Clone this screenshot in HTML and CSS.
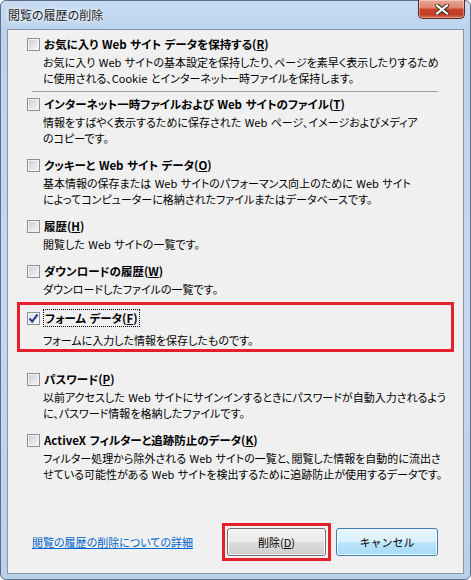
FILE: index.html
```html
<!DOCTYPE html>
<html lang="ja">
<head>
  <meta charset="UTF-8" />
  <title>閲覧の履歴の削除</title>
  <link rel="stylesheet" href="styles.css">
</head>
<body>

  <div class="window">
    <div class="titlebar">
      <span class="title">閲覧の履歴の削除</span>
      <button class="close-btn">
        <svg width="14" height="11" viewBox="0 0 14 11">
          <path d="M2 1.5 L12 9.5 M12 1.5 L2 9.5" stroke="#3b2a28" stroke-width="4.2" stroke-linecap="square" fill="none" />
          <path d="M2 1.5 L12 9.5 M12 1.5 L2 9.5" stroke="#ffffff" stroke-width="2.2" stroke-linecap="square" fill="none" />
        </svg>
      </button>
    </div>

    <div class="content">
      <div class="options">
        <div class="option first">
          <div class="option-head"><span class="checkbox"></span><span class="option-label">お気に入り Web サイト データを保持する(<u>R</u>)</span></div>
          <p class="option-desc">お気に入り Web サイトの基本設定を保持したり、ページを素早く表示したりするため<br>に使用される、Cookie とインターネット一時ファイルを保持します。</p>
        </div>
        <hr class="separator">
        <div class="option after-sep">
          <div class="option-head"><span class="checkbox"></span><span class="option-label">インターネット一時ファイルおよび Web サイトのファイル(<u>T</u>)</span></div>
          <p class="option-desc">情報をすばやく表示するために保存された Web ページ、イメージおよびメディア<br>のコピーです。</p>
        </div>
        <div class="option">
          <div class="option-head"><span class="checkbox"></span><span class="option-label">クッキーと Web サイト データ(<u>O</u>)</span></div>
          <p class="option-desc">基本情報の保存または Web サイトのパフォーマンス向上のために Web サイト<br>によってコンピューターに格納されたファイルまたはデータベースです。</p>
        </div>
        <div class="option">
          <div class="option-head"><span class="checkbox"></span><span class="option-label">履歴(<u>H</u>)</span></div>
          <p class="option-desc">閲覧した Web サイトの一覧です。</p>
        </div>
        <div class="option">
          <div class="option-head"><span class="checkbox"></span><span class="option-label">ダウンロードの履歴(<u>W</u>)</span></div>
          <p class="option-desc">ダウンロードしたファイルの一覧です。</p>
        </div>
        <div class="option marked">
          <div class="option-head">
            <span class="checkbox checked">
              <svg width="11" height="11" viewBox="0 0 11 11">
                <path d="M1.5 5.5 L4.2 8.6 L9.5 1.5" stroke="#2a3f8f" stroke-width="2.1" fill="none" />
              </svg>
            </span>
            <span class="option-label focused">フォーム データ(<u>F</u>)</span>
          </div>
          <p class="option-desc">フォームに入力した情報を保存したものです。</p>
        </div>
        <div class="option">
          <div class="option-head"><span class="checkbox"></span><span class="option-label">パスワード(<u>P</u>)</span></div>
          <p class="option-desc">以前アクセスした Web サイトにサインインするときにパスワードが自動入力されるよう<br>に、パスワード情報を格納したファイルです。</p>
        </div>
        <div class="option">
          <div class="option-head"><span class="checkbox"></span><span class="option-label">ActiveX フィルターと追跡防止のデータ(<u>K</u>)</span></div>
          <p class="option-desc">フィルター処理から除外される Web サイトの一覧と、閲覧した情報を自動的に流出さ<br>せている可能性がある Web サイトを検出するために追跡防止が使用するデータです。</p>
        </div>
      </div>

      <div class="footer">
        <a class="help-link" href="#">閲覧の履歴の削除についての詳細</a>
        <div class="buttons">
          <span class="btn-mark"><button class="btn">削除(<u>D</u>)</button></span>
          <button class="btn btn-default">キャンセル</button>
        </div>
      </div>
    </div>
  </div>

</body>
</html>
```

FILE: styles.css
```css
body {
  margin: 0;
  background: #ffffff;
  font-family: "Noto Sans CJK JP", "Noto Sans", sans-serif;
  font-size: 11px;
  color: #000;
  font-feature-settings: "palt";
  word-spacing: 1px;
}

.window {
  width: 471px;
  height: 580px;
  box-sizing: border-box;
  border: 1px solid #5d6f86;
  border-radius: 6px;
  background: linear-gradient(180deg, #c6dbf3 0%, #bcd3ee 30px, #c4d9f1 50%, #bad1ec 100%);
  display: flex;
  flex-direction: column;
}

.titlebar {
  height: 28px;
  display: flex;
  justify-content: space-between;
  align-items: flex-start;
  padding-left: 7px;
}

.title {
  font-size: 12px;
  line-height: 28px;
  color: #1a1a1a;
  text-shadow: 0 0 6px #ffffff, 0 0 3px #ffffff;
}

.close-btn {
  width: 47px;
  height: 19px;
  margin-top: -1px;
  margin-right: 5px;
  padding: 0;
  border: 1px solid #5b2a22;
  border-top: none;
  border-radius: 0 0 5px 5px;
  background: linear-gradient(180deg, #e9a896 0%, #dc836c 45%, #c8452c 50%, #c23c24 80%, #d76a4f 100%);
  box-shadow: inset 0 0 0 1px rgba(255, 255, 255, 0.35);
  display: flex;
  justify-content: center;
  align-items: center;
}

.content {
  flex: 1;
  margin: 0 6px 5px 6px;
  border: 1px solid #8896aa;
  background: #f0f0f0;
  display: flex;
  flex-direction: column;
}

.options {
  padding: 6px 9px 0 9px;
}

.option {
  padding: 0 10px;
  margin-top: 11px;
}

.option.first {
  margin-top: 0;
}

.option.after-sep {
  margin-top: 4px;
}

.option.marked {
  margin-top: 5px;
  padding: 5px 7px 1px 7px;
  border: 3px solid #e51f2a;
}

.option.marked + .option {
  margin-top: 19px;
}

.option-head {
  display: flex;
  align-items: center;
  height: 16px;
}

.checkbox {
  width: 11px;
  height: 11px;
  border: 1px solid #8e8f8f;
  box-shadow: inset 0 0 0 1px #f4f4f4;
  background: linear-gradient(135deg, #c9ccd2 0%, #e2e3e5 50%, #f8f8f8 100%);
  margin-right: 4px;
  display: flex;
  justify-content: center;
  align-items: center;
}

.checkbox.checked {
  background: linear-gradient(135deg, #dde3ea 0%, #f4f5f7 100%);
}

.option-label {
  font-size: 11.5px;
  font-weight: bold;
  line-height: 16px;
  white-space: nowrap;
}

.option-label.focused {
  outline: 1px dotted #000;
  outline-offset: 0;
  padding: 0 1px;
}

.option-desc {
  margin: 2px 0 0 16px;
  line-height: 16px;
  white-space: nowrap;
}

.marked .option-desc {
  margin-top: 6px;
}

.separator {
  margin: 5px 16px 0 15px;
  border: none;
  border-top: 1px solid #a0a0a0;
  height: 0;
}

.footer {
  margin-top: auto;
  display: flex;
  justify-content: space-between;
  align-items: center;
  padding: 0 25px 12px 24px;
}

.help-link {
  color: #0066cc;
  text-decoration: underline;
}

.buttons {
  display: flex;
  align-items: center;
  gap: 5px;
}

.btn-mark {
  border: 3px solid #e51f2a;
  padding: 2px;
  display: flex;
}

.btn {
  width: 99px;
  height: 28px;
  font-family: inherit;
  font-size: 11px;
  color: #000;
  border: 1px solid #707070;
  border-radius: 3px;
  background: linear-gradient(180deg, #f2f2f2 0%, #ebebeb 49%, #dddddd 50%, #cfcfcf 100%);
  box-shadow: inset 0 0 0 1px #fcfcfc;
  padding: 0;
}

.btn-default {
  width: 102px;
  border-color: #3c7fb1;
  background: linear-gradient(180deg, #eaf6fd 0%, #d9f0fc 49%, #bee6fd 50%, #a7d9f5 100%);
  box-shadow: inset 0 0 0 1px #f4fbfe;
}
```
